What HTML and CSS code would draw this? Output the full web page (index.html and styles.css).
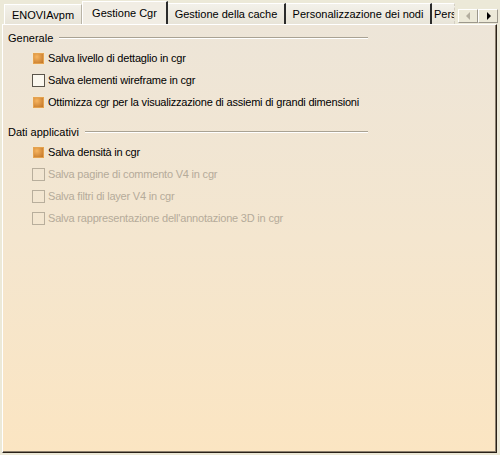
FILE: index.html
```html
<!DOCTYPE html>
<html lang="it">
<head>
    <meta charset="UTF-8">
    <title>Cgr</title>
    <link rel="stylesheet" href="styles.css">
</head>
<body>
    <div class="tabbar">
        <div class="tab first">ENOVIAvpm</div>
        <div class="tab active">Gestione Cgr</div>
        <div class="tab cache">Gestione della cache</div>
        <div class="tab nodes">Personalizzazione dei nodi</div>
        <div class="tab cut">Pers</div>
        <div class="scroller">
            <span class="arrow left"></span>
            <span class="arrow right"></span>
        </div>
    </div>

    <div class="panel">
        <div class="group">
            <div class="group-title"><span>Generale</span><span class="rule"></span></div>
            <label class="opt"><span class="box on"></span>Salva livello di dettaglio in cgr</label>
            <label class="opt"><span class="box"></span>Salva elementi wireframe in cgr</label>
            <label class="opt"><span class="box on"></span>Ottimizza cgr per la visualizzazione di assiemi di grandi dimensioni</label>
        </div>

        <div class="group">
            <div class="group-title"><span>Dati applicativi</span><span class="rule"></span></div>
            <label class="opt"><span class="box on"></span>Salva densità in cgr</label>
            <label class="opt disabled"><span class="box"></span>Salva pagine di commento V4 in cgr</label>
            <label class="opt disabled"><span class="box"></span>Salva filtri di layer V4 in cgr</label>
            <label class="opt disabled"><span class="box"></span>Salva rappresentazione dell'annotazione 3D in cgr</label>
        </div>
    </div>
</body>
</html>
```

FILE: styles.css
```css
body {
    margin: 0;
    width: 500px;
    height: 455px;
    background-color: #ece9d8;
    font-family: "Liberation Sans", Arial, sans-serif;
    font-size: 11px;
    color: #000;
    overflow: hidden;
}
.tabbar {
    display: flex;
    align-items: flex-end;
    height: 24px;
    padding-left: 4px;
}
.tab {
    flex-shrink: 0;
    height: 21px;
    line-height: 21px;
    text-align: center;
    background: linear-gradient(#f3f1ea, #e8e4d8);
    border-top: 1px solid #fff;
    border-right: 2px solid #2b2b2b;
    box-sizing: border-box;
    white-space: nowrap;
    overflow: hidden;
}
.tab.first {
    width: 78px;
    height: 20px;
    line-height: 20px;
    border-left: 1px solid #fff;
    border-right: 1px solid #b9b4a6;
}
.tab.active {
    width: 86px;
    height: 23px;
    line-height: 23px;
    background: #f1ede4;
    border-left: 1px solid #fff;
}
.tab.cache {
    width: 118px;
}
.tab.nodes {
    width: 146px;
}
.tab.cut {
    width: 23px;
    text-align: left;
    padding-left: 2px;
    border-right: 1px dashed #d4cfc3;
}
.scroller {
    display: flex;
    margin-left: 3px;
    margin-bottom: 1px;
}
.arrow {
    width: 20px;
    height: 14px;
    box-sizing: border-box;
    background: #ece9d8;
    border: 1px solid;
    border-color: #fff #9c988c #9c988c #fff;
    position: relative;
}
.arrow::after {
    content: "";
    position: absolute;
    top: 2px;
    left: 7px;
    border: 4px solid transparent;
}
.arrow.left::after {
    border-right-color: #b3ae9f;
    border-left-width: 0;
}
.arrow.right::after {
    border-left-color: #000;
    border-right-width: 0;
    left: 8px;
}
.panel {
    margin: 0 3px 0 2px;
    height: 429px;
    box-sizing: border-box;
    border: 1px solid;
    border-color: #fff #2a2118 #2a2118 #fff;
    box-shadow: inset -1px -1px 0 #8a7f6e;
    background: linear-gradient(#ede5d8 0%, #f4e6cf 50%, #fbe5c2 100%);
    padding: 6px 0 0 5px;
}
.group {
    margin-bottom: 12px;
}
.group-title {
    display: flex;
    align-items: center;
    width: 360px;
    height: 14px;
    margin-bottom: 2px;
}
.rule {
    flex: 1;
    margin-left: 6px;
    border-top: 1px solid #a9a293;
    border-bottom: 1px solid #fff;
}
.opt {
    display: flex;
    align-items: center;
    height: 22px;
    padding-left: 24px;
    white-space: nowrap;
    letter-spacing: -0.2px;
}
.box {
    width: 13px;
    height: 13px;
    box-sizing: border-box;
    margin-right: 3px;
    border: 1px solid #5a544a;
    background: #fbf7ee;
}
.box.on {
    border-color: #f4e7d0;
    background: radial-gradient(circle at 35% 35%, #f7b560, #c4782a 80%);
    box-shadow: inset 0 0 0 1px #e5a24e;
}
.opt.disabled {
    color: #b5ab9a;
}
.opt.disabled .box {
    border-color: #b8ae9c;
    background: transparent;
}
```
